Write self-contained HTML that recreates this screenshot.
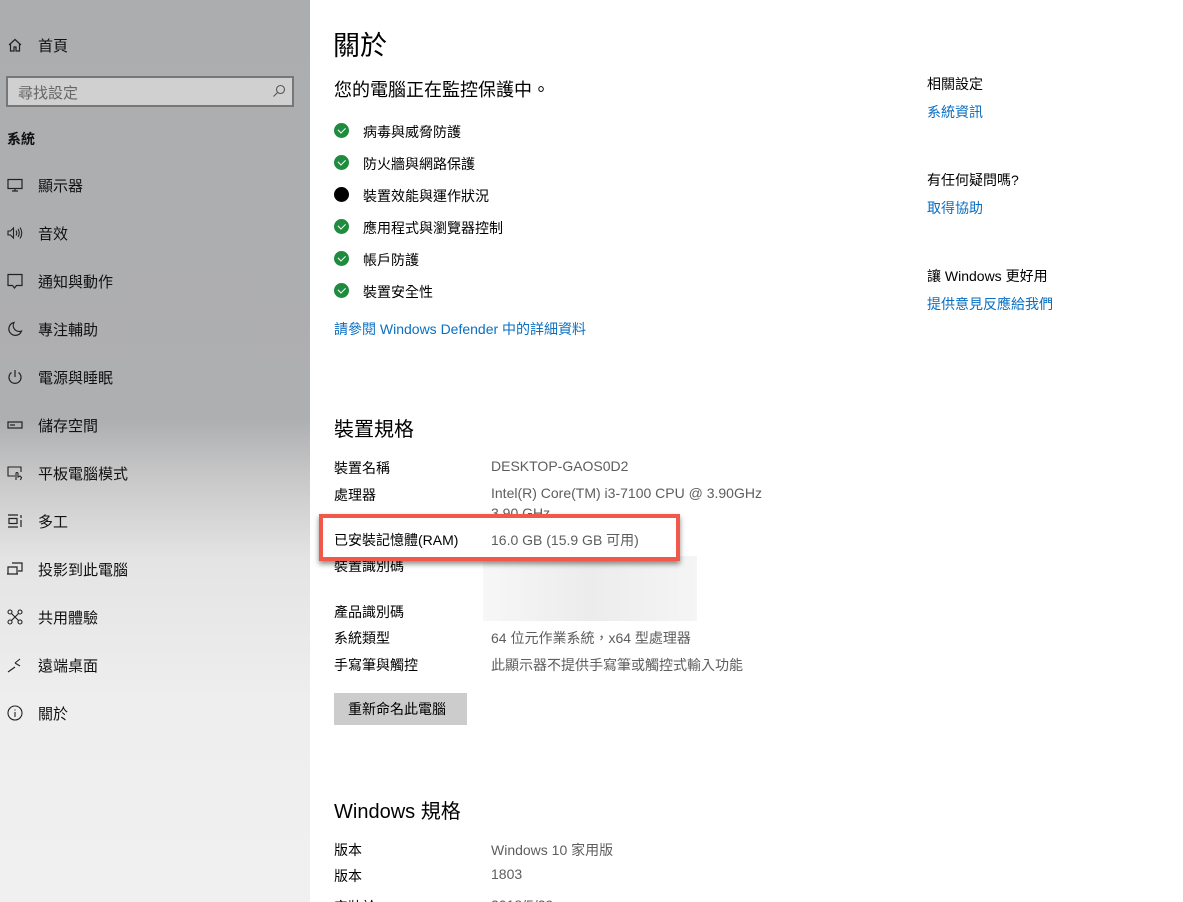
<!DOCTYPE html>
<html><head><meta charset="utf-8"><style>
*{margin:0;padding:0;box-sizing:border-box}
html{width:1183px;height:902px;overflow:hidden}
body{width:1183px;height:902px;overflow:hidden;background:#fff;font-family:"Liberation Sans","Noto Sans CJK TC",sans-serif;font-size:14px;color:#000;position:relative}
.side{position:absolute;left:0;top:0;width:310px;height:902px;background:linear-gradient(180deg,#acadaf 0px,#aeafb1 420px,#c9c9ca 480px,#e4e4e4 560px,#eeeeee 700px,#f0f0f0 902px)}
.a{position:absolute;white-space:nowrap}
.ni{position:absolute;left:7px;width:16px;height:16px}
.nt{position:absolute;left:38px;font-size:15px;color:#111}
.g{color:#5d5d5d}
.lk{color:#0a6fc2}
.ck{position:absolute;left:334px;width:15px;height:15px;border-radius:50%;background:#1f8b3f}
.ck::after{content:"";position:absolute;left:4px;top:3.5px;width:6px;height:3.5px;border-left:1.6px solid #fff;border-bottom:1.6px solid #fff;transform:rotate(-45deg)}
</style></head><body>
<div class="side">
<svg class="ni" style="top:37px" viewBox="0 0 16 16" fill="none" stroke="#222" stroke-width="1.2"><path d="M2 8L8 2.5 14 8M3.5 7v7h3.5v-4h2v4h3.5V7"/></svg>
<div class="nt a" style="top:35px">首頁</div>
<div class="a" style="left:6px;top:76px;width:288px;height:31px;border:2px solid #777;background:#d0d0d1"></div>
<div class="a" style="left:18px;top:82px;font-size:15px;color:#666">尋找設定</div>
<svg class="a" style="left:272px;top:84px" width="14" height="14" viewBox="0 0 14 14" fill="none" stroke="#555" stroke-width="1.1"><circle cx="8.5" cy="5.5" r="4"/><path d="M5.5 8.5L1.5 12.5"/></svg>
<div class="a" style="left:7px;top:129px;font-size:14px;font-weight:bold;color:#111">系統</div>
<svg class="ni" style="top:177px" viewBox="0 0 16 16" fill="none" stroke="#222" stroke-width="1.2"><rect x="1" y="2.5" width="14" height="9"/><path d="M8 11.5v2.5M5 14h6"/></svg>
<div class="nt a" style="top:175px">顯示器</div>
<svg class="ni" style="top:225px" viewBox="0 0 16 16" fill="none" stroke="#222" stroke-width="1.1"><path d="M1 6h2.5L6.5 3v10L3.5 10H1z"/><path d="M9 5.5q1.5 2.5 0 5M11 4q2.5 4 0 8M13 2.5q3.5 5.5 0 11"/></svg>
<div class="nt a" style="top:223px">音效</div>
<svg class="ni" style="top:273px" viewBox="0 0 16 16" fill="none" stroke="#222" stroke-width="1.2"><path d="M1 1.5h14v11H9.5L7.5 15 5.5 12.5H1z"/></svg>
<div class="nt a" style="top:271px">通知與動作</div>
<svg class="ni" style="top:321px" viewBox="0 0 16 16" fill="none" stroke="#222" stroke-width="1.2"><path d="M7 1.5A6.5 6.5 0 1 0 14.5 10 6 6 0 0 1 7 1.5z"/></svg>
<div class="nt a" style="top:319px">專注輔助</div>
<svg class="ni" style="top:369px" viewBox="0 0 16 16" fill="none" stroke="#222" stroke-width="1.2"><path d="M8 1v7M4.5 3.5a6 6 0 1 0 7 0"/></svg>
<div class="nt a" style="top:367px">電源與睡眠</div>
<svg class="ni" style="top:417px" viewBox="0 0 16 16" fill="none" stroke="#222" stroke-width="1.2"><rect x="1" y="5" width="14" height="6"/><path d="M3 8h5"/></svg>
<div class="nt a" style="top:415px">儲存空間</div>
<svg class="ni" style="top:465px" viewBox="0 0 16 16" fill="none" stroke="#222" stroke-width="1.1"><path d="M8 11H1V2h13v5"/><path d="M9 15V8.5a1 1 0 0 1 2 0V12l2-1 1.5 1.5-1 2.5"/></svg>
<div class="nt a" style="top:463px">平板電腦模式</div>
<svg class="ni" style="top:513px" viewBox="0 0 16 16" fill="none" stroke="#222" stroke-width="1.2"><path d="M1 2h10M1 14h10M2 5.5v5h8v-5zM14 2v3M14 7v7"/></svg>
<div class="nt a" style="top:511px">多工</div>
<svg class="ni" style="top:561px" viewBox="0 0 16 16" fill="none" stroke="#222" stroke-width="1.2"><path d="M5 2h10v8H11M1 6h9v7H1zM0 13h11"/></svg>
<div class="nt a" style="top:559px">投影到此電腦</div>
<svg class="ni" style="top:609px" viewBox="0 0 16 16" fill="none" stroke="#222" stroke-width="1.1"><circle cx="3" cy="3" r="2"/><circle cx="13" cy="3" r="2"/><circle cx="3" cy="13" r="2"/><circle cx="13" cy="13" r="2"/><path d="M4.5 4.5l7 7M11.5 4.5l-7 7"/></svg>
<div class="nt a" style="top:607px">共用體驗</div>
<svg class="ni" style="top:657px" viewBox="0 0 16 16" fill="none" stroke="#222" stroke-width="1.1"><path d="M1 15l7-5M8 6l5-4M8 6l5 3"/></svg>
<div class="nt a" style="top:655px">遠端桌面</div>
<svg class="ni" style="top:705px" viewBox="0 0 16 16" fill="none" stroke="#222" stroke-width="1.1"><circle cx="8" cy="8" r="7"/><path d="M8 7v5M8 4.5v1"/></svg>
<div class="nt a" style="top:703px">關於</div>
</div>

<div class="a" style="left:333px;top:24px;font-size:27px">關於</div>
<div class="a" style="left:334px;top:76px;font-size:18px">您的電腦正在監控保護中。</div>
<div class="ck" style="top:123px"></div><div class="a" style="left:363px;top:122px">病毒與威脅防護</div>
<div class="ck" style="top:155px"></div><div class="a" style="left:363px;top:154px">防火牆與網路保護</div>
<div class="a" style="left:334px;top:187px;width:15px;height:15px;border-radius:50%;background:#000"></div><div class="a" style="left:363px;top:186px">裝置效能與運作狀況</div>
<div class="ck" style="top:219px"></div><div class="a" style="left:363px;top:218px">應用程式與瀏覽器控制</div>
<div class="ck" style="top:251px"></div><div class="a" style="left:363px;top:250px">帳戶防護</div>
<div class="ck" style="top:283px"></div><div class="a" style="left:363px;top:282px">裝置安全性</div>
<div class="a lk" style="left:334px;top:319px">請參閱 Windows Defender 中的詳細資料</div>

<div class="a" style="left:334px;top:413px;font-size:20px">裝置規格</div>
<div class="a" style="left:334px;top:458px">裝置名稱</div><div class="a g" style="left:491px;top:458px">DESKTOP-GAOS0D2</div>
<div class="a" style="left:334px;top:485px">處理器</div><div class="a g" style="left:491px;top:485px">Intel(R) Core(TM) i3-7100 CPU @ 3.90GHz</div>
<div class="a g" style="left:491px;top:505px">3.90 GHz</div>
<div class="a" style="left:334px;top:556px">裝置識別碼</div>
<div class="a" style="left:483px;top:556px;width:214px;height:65px;background:linear-gradient(90deg,#f7f7f7,#ececec 50%,#f5f5f5)"></div>
<div class="a" style="left:319px;top:514px;width:361px;height:47px;border:4px solid #f0584a;background:#fff;box-shadow:0 3px 5px rgba(0,0,0,.45)"></div>
<div class="a" style="left:334px;top:530px">已安裝記憶體(RAM)</div><div class="a g" style="left:491px;top:530px">16.0 GB (15.9 GB 可用)</div>
<div class="a" style="left:334px;top:602px">產品識別碼</div>
<div class="a" style="left:334px;top:628px">系統類型</div><div class="a g" style="left:491px;top:628px">64 位元作業系統，x64 型處理器</div>
<div class="a" style="left:334px;top:655px">手寫筆與觸控</div><div class="a g" style="left:491px;top:655px">此顯示器不提供手寫筆或觸控式輸入功能</div>
<div class="a" style="left:334px;top:693px;width:133px;height:32px;background:#ccc"></div>
<div class="a" style="left:348px;top:699px;font-size:14px">重新命名此電腦</div>

<div class="a" style="left:334px;top:795px;font-size:20px">Windows 規格</div>
<div class="a" style="left:334px;top:840px">版本</div><div class="a g" style="left:491px;top:840px">Windows 10 家用版</div>
<div class="a" style="left:334px;top:866px">版本</div><div class="a g" style="left:491px;top:866px">1803</div>
<div class="a" style="left:334px;top:897px">安裝於</div><div class="a g" style="left:491px;top:897px">2018/5/29</div>

<div class="a" style="left:927px;top:74px">相關設定</div>
<div class="a lk" style="left:927px;top:102px">系統資訊</div>
<div class="a" style="left:927px;top:170px">有任何疑問嗎?</div>
<div class="a lk" style="left:927px;top:198px">取得協助</div>
<div class="a" style="left:927px;top:266px">讓 Windows 更好用</div>
<div class="a lk" style="left:927px;top:294px">提供意見反應給我們</div>
</body></html>
